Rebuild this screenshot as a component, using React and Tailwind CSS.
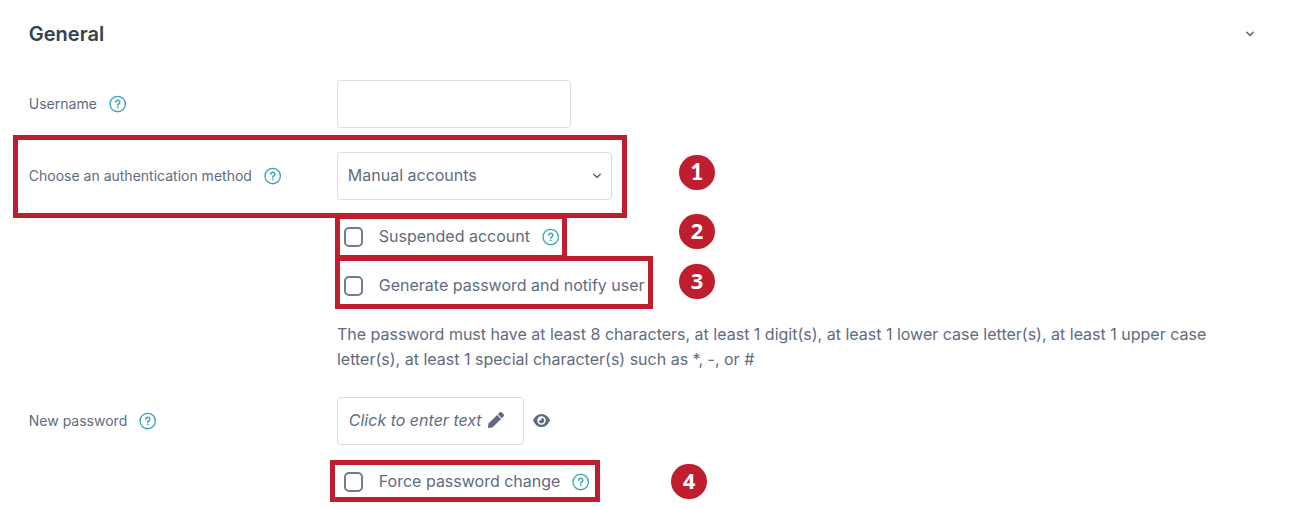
import { FaPen } from 'react-icons/fa';

const HelpIcon = () => (
    <svg className="w-[18px] h-[18px] shrink-0 text-[#3aa6b4]" viewBox="0.3 0 18 18" fill="none" stroke="currentColor" strokeLinecap="round" strokeLinejoin="round">
        <circle cx="9" cy="9" r="7.7" strokeWidth="1.35" />
        <path d="M7.1 7.3a2 2 0 1 1 2.9 1.7c-.7.4-1 .7-1 1.2" strokeWidth="1.5" />
        <circle cx="9" cy="12.3" r=".45" fill="currentColor" strokeWidth=".8" />
    </svg>
);

const ChevronIcon = () => (
    <svg className="w-[10px] h-[6px] shrink-0" viewBox="0 0 10 6" fill="none" stroke="currentColor" strokeWidth="1.5" strokeLinecap="round" strokeLinejoin="round">
        <path d="M1.7 1.2 5 4.4l3.3-3.2" />
    </svg>
);

const EyeIcon = () => (
    <svg className="w-[17px] h-[15px] shrink-0" viewBox="0 0 576 512" fill="currentColor">
        <path d="M288 32c-80.800 0-145.500 36.800-192.600 80.600C48.600 156 17.300 208 2.500 243.700c-3.300 7.900-3.300 16.700 0 24.600C17.300 304 48.600 356 95.400 399.400C142.500 443.200 207.200 480 288 480s145.500-36.800 192.600-80.600c46.800-43.500 78.100-95.400 93-131.100c3.300-7.900 3.300-16.700 0-24.600c-14.900-35.700-46.200-87.700-93-131.100C433.500 68.800 368.800 32 288 32zM144 256a144 144 0 1 1 288 0 144 144 0 1 1-288 0zm144-64c0 35.300-28.700 64-64 64c-7.100 0-13.900-1.200-20.300-3.300c-5.500-1.800-11.900 1.600-11.700 7.400c.3 6.900 1.300 13.800 3.200 20.700c13.700 51.200 66.400 81.600 117.600 67.900s81.600-66.400 67.900-117.600c-11.100-41.500-47.800-69.400-88.600-71.100c-5.800-.2-9.200 6.100-7.400 11.700c2.100 6.400 3.300 13.200 3.300 20.300z" />
    </svg>
);

const Label = ({ children }) => (
    <div className="w-[308px] shrink-0 pb-px flex items-center gap-3 text-[14px]">
        <span className="pb-px">{children}</span>
        <HelpIcon />
    </div>
);

const Checkbox = ({ label, help }) => (
    <label className="ml-[315px] h-6 flex items-center">
        <input type="checkbox" className="appearance-none w-[19.5px] h-5 shrink-0 mr-[15.5px] border-2 border-[#717e90] rounded-[5px] bg-white" />
        <span className="text-[16px] mr-3 pb-[2px]">{label}</span>
        {help && <HelpIcon />}
    </label>
);

const badges = [
    { number: 1, place: 'left-[679px] top-[155px]', font: "font-['Lato',sans-serif] font-black pb-px" },
    { number: 2, place: 'left-[679px] top-[214px]', font: "font-['Open_Sans',sans-serif] font-bold pb-1" },
    { number: 3, place: 'left-[679px] top-[264px]', font: "font-['Open_Sans',sans-serif] font-bold pb-1" },
    { number: 4, place: 'left-[671px] top-[464px]', font: "font-['Open_Sans',sans-serif] font-bold pb-1" },
];

const frames = [
    'left-[13px] top-[135px] w-[614px] h-[83px]',
    'left-[335px] top-[214px] w-[232px] h-[46px]',
    'left-[335px] top-[256px] w-[318px] h-[53px]',
    'left-[330px] top-[460px] w-[270px] h-[42px]',
];

export default function App() {
    return (
        <div className="relative w-[1292px] h-[508px] overflow-hidden bg-white pl-[28.8px] text-[#5f6b7f] font-['Inter',sans-serif]">
            <header className="h-[68px] pr-[37px] flex items-center justify-between">
                <h3 className="text-[20px] font-semibold text-[#36414f]">General</h3>
                <ChevronIcon />
            </header>

            <form className="pt-3">
                <div className="flex items-center mb-6">
                    <Label>Username</Label>
                    <input type="text" className="w-[234px] h-12 border border-[#d9dcdf] rounded-[4px]" />
                </div>

                <div className="flex items-center">
                    <Label>Choose an authentication method</Label>
                    <button type="button" className="w-[275px] h-12 pl-[10px] pr-[9px] flex items-center justify-between border border-[#d9dcdf] rounded-[4px] text-[16px]">
                        <span className="pb-[2px]">Manual accounts</span>
                        <ChevronIcon />
                    </button>
                </div>

                <div className="pt-[25px] flex flex-col gap-[25px]">
                    <Checkbox label="Suspended account" help />
                    <Checkbox label="Generate password and notify user" />
                </div>

                <p className="ml-[308.2px] mt-[24px] mb-[26px] w-[890px] text-[16px] leading-[24.5px]">
                    The password must have at least 8 characters, at least 1 digit(s), at least 1 lower case letter(s), at least 1 upper case letter(s), at least 1 special character(s) such as *, -, or #
                </p>

                <div className="flex items-center">
                    <Label>New password</Label>
                    <div className="w-[187px] h-12 pl-[11px] pb-[2px] flex items-center gap-[6px] border border-[#d9dcdf] rounded-[4px]">
                        <span className="text-[16px] italic">Click to enter text</span>
                        <FaPen className="w-4 h-4" />
                    </div>
                    <button type="button" className="ml-[9px] pb-px"><EyeIcon /></button>
                </div>

                <div className="pt-[25px]">
                    <Checkbox label="Force password change" help />
                </div>
            </form>

            {frames.map((place) => (
                <div key={place} className={`absolute border-5 border-[#bf1e2e] ${place}`} />
            ))}
            {badges.map(({ number, place, font }) => (
                <div key={number} className={`absolute w-9 h-[35px] rounded-full bg-[#bf1e2e] flex items-center justify-center text-white text-[22px] leading-none ${font} ${place}`}>
                    {number}
                </div>
            ))}
        </div>
    );
}
